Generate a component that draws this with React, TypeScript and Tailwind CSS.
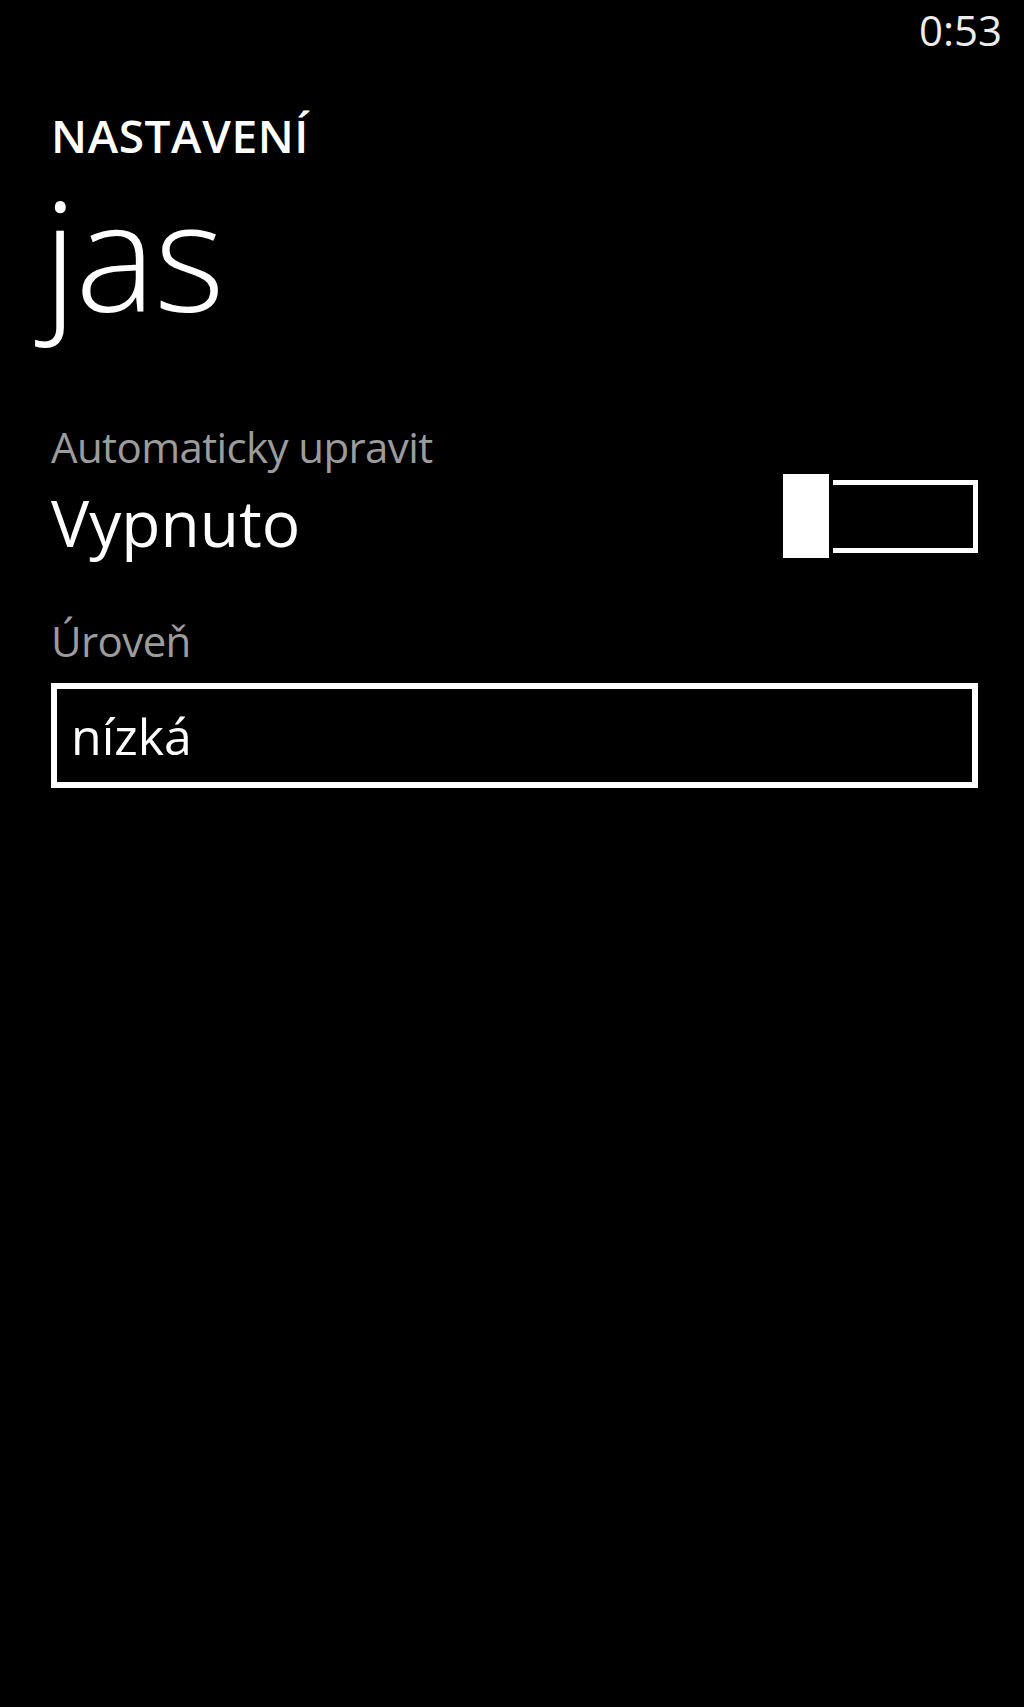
export default function App() {
  return (
    <main className="min-h-[1707px] w-full bg-black text-white font-['Open_Sans',sans-serif]">
      {/* status bar */}
      <div className="flex justify-end pr-[22px] pt-[9px] text-[42px] leading-[42px] text-[#ececec]">
        0:53
      </div>

      <div className="px-[46px] pl-[51px]">
        <div className="mt-[61px] text-[46px] leading-[46px] font-semibold tracking-[0.6px]">
          NASTAVENÍ
        </div>
        <h1 className="mt-[20px] -ml-[8px] text-[152px] leading-[152px] font-light tracking-[-2px]">
          jas
        </h1>

        <div className="mt-[96px] text-[42px] leading-[42px] tracking-[-0.6px] text-[#9c9c9c]">
          Automaticky upravit
        </div>
        <div className="mt-[6px] flex items-start justify-between">
          <span className="mt-[17px] text-[64px] leading-[64px]">Vypnuto</span>
          <div className="flex items-center gap-[4px]">
            <div className="w-[46px] h-[84px] bg-white" />
            <div className="w-[145px] h-[73px] border-y-[5px] border-r-[5px] border-white" />
          </div>
        </div>

        <div className="mt-[62px] text-[42px] leading-[42px] tracking-[-0.6px] text-[#9c9c9c]">
          Úroveň
        </div>
        <div className="mt-[21px] h-[105px] border-[6px] border-white flex items-center pl-[14px]">
          <span className="text-[50px] leading-[50px]">nízká</span>
        </div>
      </div>
    </main>
  );
}
